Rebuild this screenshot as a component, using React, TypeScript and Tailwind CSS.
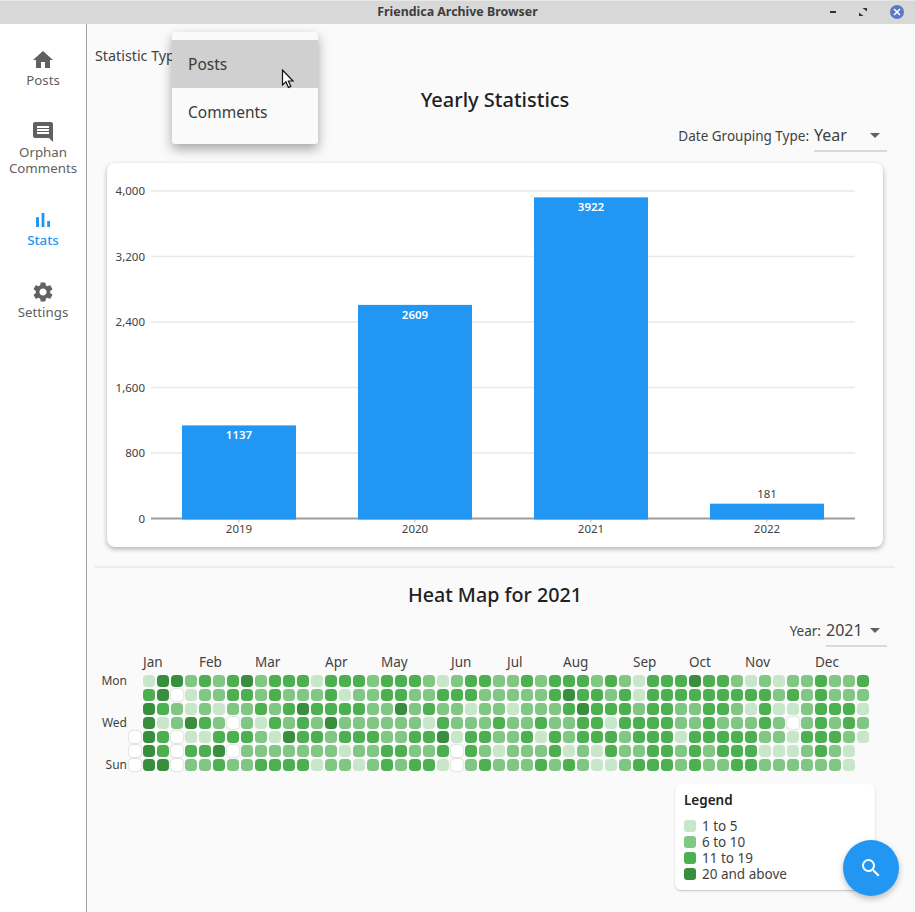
import { MdHome, MdComment, MdSettings, MdSearch, MdArrowDropDown } from "react-icons/md";

const bars = [
  { year: "2019", value: 1137, x: 75 },
  { year: "2020", value: 2609, x: 251 },
  { year: "2021", value: 3922, x: 427 },
  { year: "2022", value: 181, x: 603 },
];

const ticks = ["4,000", "3,200", "2,400", "1,600", "800", "0"];

const months = [
  { name: "Jan", cols: 4 },
  { name: "Feb", cols: 4 },
  { name: "Mar", cols: 5 },
  { name: "Apr", cols: 4 },
  { name: "May", cols: 5 },
  { name: "Jun", cols: 4 },
  { name: "Jul", cols: 4 },
  { name: "Aug", cols: 5 },
  { name: "Sep", cols: 4 },
  { name: "Oct", cols: 4 },
  { name: "Nov", cols: 5 },
  { name: "Dec", cols: 4 },
];

// one string per weekday, one digit per week; lead marks the empty partial week before January
const heat = [
  { label: "Mon", lead: false, cells: "144232342333133323332123322323332" + "3213334332121223223" },
  { label: "", lead: false, cells: "340122332322231223322333222223433" + "2313333333332323222" },
  { label: "", lead: false, cells: "432121223234333322423221221222343" + "3323322332131123331" },
  { label: "Wed", lead: false, cells: "412432021323242222221322232232233" + "1333322322232023232" },
  { label: "", lead: true, cells: "430113332143323332233413322313233" + "3233313333322133321" },
  { label: "", lead: true, cells: "430334022222221223322303212223121" + "322332323331112321" },
  { label: "Sun", lead: true, cells: "440223223333122123233102322232321" + "123332322332222221" },
];

const levelClass: Record<string, string> = {
  "0": "bg-white shadow-[0_0_2px_rgba(0,0,0,0.3)]",
  "1": "bg-[#c8e6c9]",
  "2": "bg-[#81c784]",
  "3": "bg-[#4caf50]",
  "4": "bg-[#388e3c]",
};

const legend = [
  { label: "1 to 5", cls: "bg-[#c8e6c9]" },
  { label: "6 to 10", cls: "bg-[#81c784]" },
  { label: "11 to 19", cls: "bg-[#4caf50]" },
  { label: "20 and above", cls: "bg-[#388e3c]" },
];

function StatsIcon() {
  return (
    <svg width="24" height="24" viewBox="0 0 24 24" fill="currentColor">
      <path d="M5 9.2h3V19H5zM10.6 5h2.8v14h-2.8zm5.6 8H19v6h-2.8z" />
    </svg>
  );
}

function RailItem({ icon, label, active }: { icon: React.ReactNode; label: string; active?: boolean }) {
  return (
    <div className={`flex flex-col items-center text-[13.3px] leading-4 ${active ? "text-[#2196f3] font-medium" : "text-[#616161]"}`}>
      {icon}
      <span className="text-center">{label}</span>
    </div>
  );
}

function Chart() {
  const zero = 355.5;
  return (
    <svg width="776" height="384" className="block">
      {ticks.map((t, i) => {
        const y = 28 + i * 65.5;
        return (
          <g key={t}>
            {i < 5 && <line x1="44" x2="748" y1={y} y2={y} stroke="#e9e9e9" strokeWidth="1.3" />}
            <text x="38" y={y + 4} textAnchor="end" fontSize="11.5" fill="#424242">{t}</text>
          </g>
        );
      })}
      {bars.map((b) => {
        const h = (b.value / 4000) * 327.5;
        const cx = b.x + 57;
        return (
          <g key={b.year}>
            <rect x={b.x} y={zero - h} width="114" height={h} fill="#2196f3" />
            {b.value > 500 ? (
              <text x={cx} y={zero - h + 14} textAnchor="middle" fontSize="11.5" fontWeight="600" fill="#fff">{b.value}</text>
            ) : (
              <text x={cx} y={zero - h - 6} textAnchor="middle" fontSize="11.5" fill="#424242">{b.value}</text>
            )}
            <line x1={cx} x2={cx} y1={zero} y2={zero + 4} stroke="#bdbdbd" />
            <text x={cx} y={zero + 14} textAnchor="middle" fontSize="11.5" fill="#424242">{b.year}</text>
          </g>
        );
      })}
      <line x1="44" x2="748" y1={zero} y2={zero} stroke="#9e9e9e" strokeWidth="2" />
      {bars.map((b) => (
        <rect key={b.year} x={b.x} y={zero - 2} width="114" height="3" fill="#2196f3" />
      ))}
    </svg>
  );
}

function HeatMap() {
  return (
    <div className="mt-[3px] text-[#424242]">
      <div className="flex h-[24px] items-center pl-[48px] text-[13.5px]">
        {months.map((m) => (
          <span key={m.name} style={{ width: m.cols * 14 }} className="shrink-0">{m.name}</span>
        ))}
      </div>
      <div className="mt-[1px] flex flex-col gap-[2px]">
        {heat.map((row, r) => (
          <div key={r} className="flex h-[12px] gap-[2px]">
            <span className="w-[32px] shrink-0 text-right text-xs leading-[12px]">{row.label}</span>
            <span className={`h-[12px] w-[12px] shrink-0 rounded-[4px] ${row.lead ? levelClass["0"] : ""}`} />
            {row.cells.split("").map((c, i) => (
              <span key={i} className={`h-[12px] w-[12px] shrink-0 rounded-[4px] ${levelClass[c]}`} />
            ))}
          </div>
        ))}
      </div>
    </div>
  );
}

export default function App() {
  return (
    <div className="relative flex h-[912px] w-[915px] flex-col overflow-hidden bg-[#fafafa] font-['Noto_Sans',sans-serif] text-[#212121]">
      {/* Title bar */}
      <div className="relative flex h-[24px] shrink-0 items-center justify-center border-t border-t-[#e6e6e6] bg-[#d8d8d8]">
        <span className="text-[12.4px] font-bold text-[#3d3d3d]">Friendica Archive Browser</span>
        <div className="absolute right-[11px] top-[4px] flex items-center gap-[23px]">
          <span className="h-[2px] w-[6px] bg-[#333]" />
          <svg width="8" height="8" viewBox="0 0 8 8">
            <path d="M0 8V4.5L4.5 8zM8 0v3.5L3.5 0z" fill="#333" />
          </svg>
          <span className="flex h-[14px] w-[14px] items-center justify-center rounded-full bg-[#5a78c8]">
            <svg width="8" height="8" viewBox="0 0 8 8">
              <path d="M1 1l6 6M7 1L1 7" stroke="#fff" strokeWidth="1.6" />
            </svg>
          </span>
        </div>
      </div>

      <div className="flex min-h-0 flex-1">
        {/* Navigation rail */}
        <nav className="flex w-[87px] shrink-0 flex-col items-center gap-[32px] border-r border-r-[#9e9e9e] bg-white pt-[24px]">
          <RailItem icon={<MdHome size={24} />} label="Posts" />
          <RailItem icon={<MdComment size={24} />} label="Orphan Comments" />
          <RailItem icon={<StatsIcon />} label="Stats" active />
          <RailItem icon={<MdSettings size={24} />} label="Settings" />
        </nav>

        {/* Main */}
        <main className="w-[828px] px-2">
          <div className="flex h-[48px] w-[800px] items-center pt-[16px] text-[14.3px] text-[#424242]">
            <span>Statistic Type:</span>
          </div>
          <h1 className="flex h-[48px] w-[800px] items-center justify-center pt-[8px] text-xl font-medium">Yearly Statistics</h1>
          <div className="flex h-[32px] w-[792px] items-center justify-end gap-[5px] text-[13.5px] text-[#424242]">
            <span>Date Grouping Type:</span>
            <div className="flex h-[32px] w-[73px] items-center justify-between border-b-2 border-b-[#d9d9d9] text-base">
              <span>Year</span>
              <MdArrowDropDown size={24} className="text-[#616161]" />
            </div>
          </div>
          <div className="mx-3 mt-[11px] h-[384px] w-[776px] rounded-lg bg-white shadow-[0_2px_5px_rgba(0,0,0,0.3)]">
            <Chart />
          </div>
          <div className="mt-[19px] h-[2px] w-[800px] bg-[#ececec]" />
          <h2 className="flex h-[40px] w-[800px] items-center justify-center pt-[14px] text-[19.7px] font-medium">Heat Map for 2021</h2>
          <div className="flex h-[39px] w-[792px] items-center justify-end gap-[5px] pt-[7px] text-[13.5px] text-[#424242]">
            <span>Year:</span>
            <div className="flex h-[32px] w-[61px] items-center justify-between border-b-2 border-b-[#d9d9d9] text-base">
              <span>2021</span>
              <MdArrowDropDown size={24} className="text-[#616161]" />
            </div>
          </div>
          <HeatMap />
          <div className="ml-[580px] mt-[13px] h-[106px] w-[200px] rounded-md bg-white px-[9px] pt-[7px] shadow-[0_1px_2px_rgba(0,0,0,0.22)]">
            <div className="text-[13.5px] font-semibold leading-[18px]">Legend</div>
            <div className="mt-[9px] flex flex-col text-[13.5px] leading-4 text-[#424242]">
              {legend.map((l) => (
                <div key={l.label} className="flex h-[16px] items-center gap-[6px]">
                  <span className={`h-[12px] w-[12px] rounded-[3px] ${l.cls}`} />
                  <span>{l.label}</span>
                </div>
              ))}
            </div>
          </div>
        </main>
      </div>

      {/* Open dropdown menu */}
      <div className="absolute left-[172px] top-[32px] w-[146px] rounded-[3px] bg-[#fafafa] py-[8px] text-[15.5px] text-[#3a3a3a] shadow-[0_5px_12px_rgba(0,0,0,0.35)]">
        <div className="flex h-[48px] items-center bg-[#d0d0d0] px-[16px] pt-[2px]">Posts</div>
        <div className="flex h-[48px] items-center px-[16px] pt-[2px]">Comments</div>
      </div>

      {/* Mouse pointer */}
      <svg width="14" height="20" viewBox="0 0 14 20" className="absolute left-[281px] top-[69px]">
        <path d="M1.5 1v15l3.5-3.2 2.4 5.6 2.4-1-2.4-5.4h4.6z" fill="#fff" stroke="#111" strokeWidth="1.2" />
      </svg>

      {/* Search FAB */}
      <div className="absolute left-[843px] top-[840px] flex h-[56px] w-[56px] items-center justify-center rounded-full bg-[#2196f3] shadow-[0_3px_6px_rgba(0,0,0,0.25)]">
        <MdSearch size={24} className="text-white" />
      </div>
    </div>
  );
}
